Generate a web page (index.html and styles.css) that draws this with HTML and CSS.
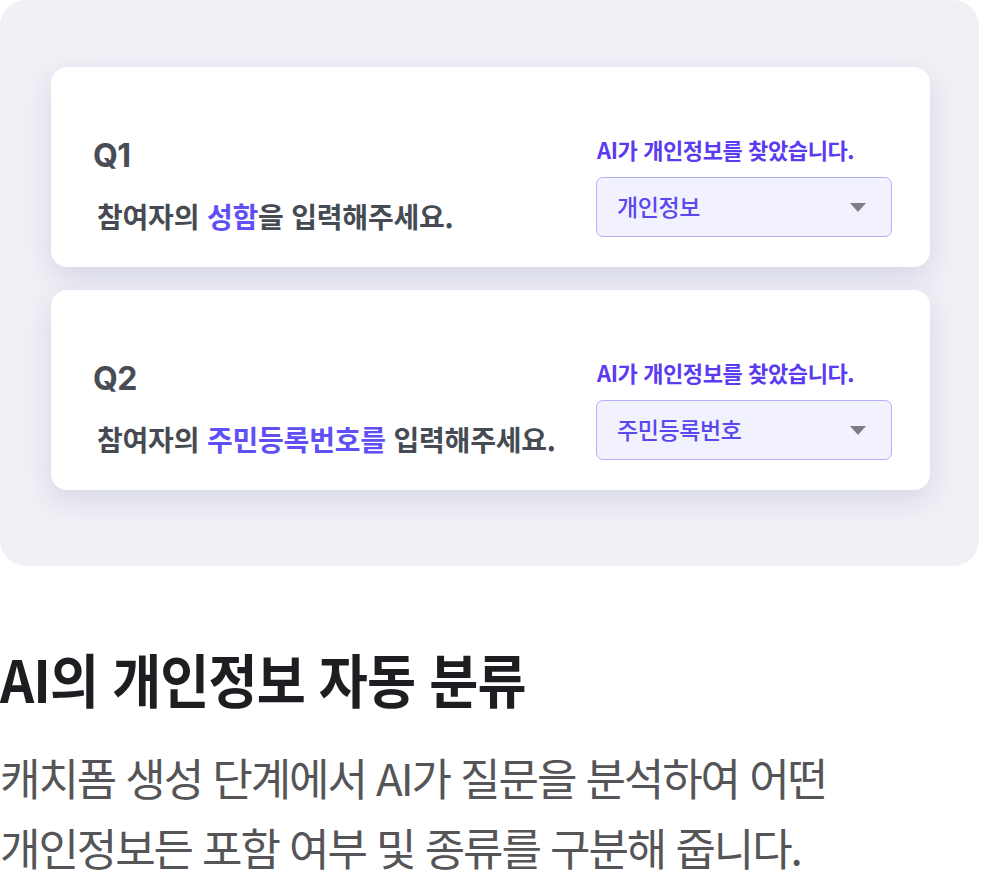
FILE: index.html
```html
<!DOCTYPE html>
<html lang="ko">
<head>
<meta charset="utf-8">
<title>AI의 개인정보 자동 분류</title>
<link rel="stylesheet" href="styles.css">
</head>
<body>
<div class="page">
  <section class="panel">
    <div class="card">
      <div class="question">
        <div class="qnum">Q1</div>
        <div class="qtext">참여자의 <span class="hl">성함</span>을 입력해주세요.</div>
      </div>
      <div class="detect">
        <div class="detect-label">AI가 개인정보를 찾았습니다.</div>
        <div class="select">
          <span class="select-value">개인정보</span>
          <span class="caret"></span>
        </div>
      </div>
    </div>
    <div class="card">
      <div class="question">
        <div class="qnum">Q2</div>
        <div class="qtext">참여자의 <span class="hl">주민등록번호를</span> 입력해주세요.</div>
      </div>
      <div class="detect">
        <div class="detect-label">AI가 개인정보를 찾았습니다.</div>
        <div class="select">
          <span class="select-value">주민등록번호</span>
          <span class="caret"></span>
        </div>
      </div>
    </div>
  </section>
  <h1 class="title">AI의 개인정보 자동 분류</h1>
  <p class="desc">캐치폼 생성 단계에서 AI가 질문을 분석하여 어떤<br>개인정보든 포함 여부 및 종류를 구분해 줍니다.</p>
</div>
</body>
</html>
```
FILE: styles.css
```css
* { box-sizing: border-box; }
html, body { margin: 0; padding: 0; background: #ffffff; }
body {
  font-family: "Noto Sans CJK KR", "Noto Sans", sans-serif;
  width: 981px;
  height: 886px;
  overflow: hidden;
}
.page { width: 981px; }

.panel {
  width: 979px;
  height: 566px;
  background: #f0f1f6;
  border-radius: 26px;
  padding: 67px 49px 0 51px;
  display: flex;
  flex-direction: column;
  gap: 23px;
}

.card {
  height: 200px;
  background: #ffffff;
  border-radius: 16px;
  box-shadow: 0 10px 28px rgba(170, 172, 205, 0.38);
  display: flex;
  justify-content: space-between;
  align-items: flex-end;
  padding: 0 38px 30px 42px;
}

.question { padding-bottom: 4px; }
.qnum {
  font-family: Inter, "Noto Sans", sans-serif;
  font-weight: 700;
  font-size: 32px;
  line-height: 38px;
  color: #474c55;
  letter-spacing: -0.5px;
}
.qtext {
  margin-top: 24px;
  margin-left: 4px;
  font-size: 28px;
  line-height: 34px;
  font-weight: 700;
  color: #464b53;
  letter-spacing: -0.2px;
}
.hl { color: #5f4ff4; }

.detect { width: 296px; }
.detect-label {
  font-size: 22px;
  line-height: 26px;
  font-weight: 700;
  color: #5a3cf0;
  letter-spacing: -0.4px;
  margin-left: 1px;
}
.select {
  margin-top: 15px;
  height: 60px;
  border: 1.5px solid #b5b1f8;
  background: #f2f2ff;
  border-radius: 7px;
  display: flex;
  align-items: center;
  justify-content: space-between;
  padding: 0 25px 0 20px;
}
.select-value {
  font-size: 23px;
  font-weight: 500;
  color: #5b47ee;
  letter-spacing: -0.4px;
  margin-top: -2px;
}
.caret {
  width: 0;
  height: 0;
  border-left: 8.5px solid transparent;
  border-right: 8.5px solid transparent;
  border-top: 9px solid #7e7e82;
}

.title {
  margin: 78px 0 0 0;
  font-size: 58px;
  line-height: 68px;
  font-weight: 700;
  color: #1e1e22;
  letter-spacing: -1px;
  transform: scaleX(0.92);
  transform-origin: left center;
  white-space: nowrap;
}
.desc {
  margin: 30px 0 0 0;
  font-size: 44px;
  line-height: 70px;
  font-weight: 400;
  color: #555558;
  letter-spacing: -2.1px;
  white-space: nowrap;
}
```
